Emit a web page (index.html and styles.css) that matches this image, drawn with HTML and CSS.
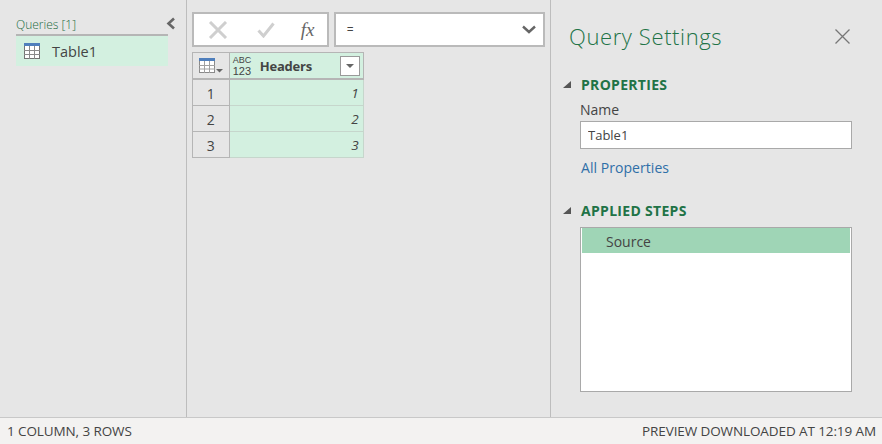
FILE: index.html
```html
<!DOCTYPE html>
<html lang="en">
<head>
  <meta charset="UTF-8" />
  <title>Query Editor</title>
  <link rel="stylesheet" href="styles.css">
</head>
<body>
  <div class="main">

    <!-- Queries pane -->
    <aside class="queries">
      <div class="queries-head">
        <span class="queries-title">Queries [1]</span>
        <svg class="collapse" width="10" height="13" viewBox="0 0 10 13"><path d="M8 1.5 L2.5 6.5 L8 11.5" fill="none" stroke="#666" stroke-width="2.6"/></svg>
      </div>
      <div class="query-item">
        <svg class="table-icon" width="16" height="16" viewBox="0 0 16 16">
          <rect x="0.5" y="0.5" width="15" height="15" fill="#fff" stroke="#737373"/>
          <rect x="0" y="0" width="16" height="3" fill="#4f7fbc"/>
          <path d="M0 7.5H16M0 11.5H16M5.5 3V16M10.5 3V16" stroke="#8a8a8a" fill="none"/>
        </svg>
        <span>Table1</span>
      </div>
    </aside>

    <!-- Formula bar and data grid -->
    <section class="center">
      <div class="formula-row">
        <div class="formula-buttons">
          <svg width="20" height="18" viewBox="0 0 20 18"><path d="M2 1 L18 17 M18 1 L2 17" stroke="#cfcfcf" stroke-width="3" fill="none"/></svg>
          <svg width="18" height="16" viewBox="0 0 18 16"><path d="M1.5 8.5 L6.5 14 L16.5 1.5" stroke="#cfcfcf" stroke-width="3" fill="none"/></svg>
          <span class="fx">fx</span>
        </div>
        <div class="formula-input">
          <span class="formula-text">=</span>
          <svg width="14" height="9" viewBox="0 0 14 9"><path d="M1 1.5 L7 7 L13 1.5" stroke="#666" stroke-width="2.4" fill="none"/></svg>
        </div>
      </div>

      <div class="grid">
        <div class="grid-row grid-head">
          <div class="corner">
            <svg width="24" height="15" viewBox="0 0 24 15">
              <rect x="0.5" y="0.5" width="15" height="14" fill="#fff" stroke="#8a8a8a"/>
              <rect x="0" y="0" width="16" height="3" fill="#4f7fbc"/>
              <path d="M0 7.5H16M0 11H16M5.5 3V15M10.5 3V15" stroke="#a0a0a0" fill="none"/>
              <path d="M17 11H24L20.5 14.5Z" fill="#666"/>
            </svg>
          </div>
          <div class="col-head">
            <div class="type-icon">
              <span class="type-abc">ABC</span>
              <span class="type-num">123</span>
            </div>
            <span class="col-name">Headers</span>
            <span class="col-filter"><i></i></span>
          </div>
        </div>
        <div class="grid-row">
          <div class="row-num">1</div>
          <div class="cell">1</div>
        </div>
        <div class="grid-row">
          <div class="row-num">2</div>
          <div class="cell">2</div>
        </div>
        <div class="grid-row">
          <div class="row-num">3</div>
          <div class="cell">3</div>
        </div>
      </div>
    </section>

    <!-- Query settings pane -->
    <aside class="settings">
      <div class="settings-head">
        <h1>Query Settings</h1>
        <svg width="15" height="15" viewBox="0 0 15 15"><path d="M0.5 0.5 L14.5 14.5 M14.5 0.5 L0.5 14.5" stroke="#777" stroke-width="1.3" fill="none"/></svg>
      </div>

      <h2 class="section-title"><i class="arrow"></i>PROPERTIES</h2>
      <div class="section-body">
        <label class="name-label" for="query-name">Name</label>
        <input class="name-input" id="query-name" value="Table1" />
        <a class="all-props" href="#">All Properties</a>
      </div>

      <h2 class="section-title steps-title"><i class="arrow"></i>APPLIED STEPS</h2>
      <div class="section-body">
        <div class="steps">
          <div class="step">Source</div>
        </div>
      </div>
    </aside>
  </div>

  <footer class="status">
    <span>1 COLUMN, 3 ROWS</span>
    <span>PREVIEW DOWNLOADED AT 12:19 AM</span>
  </footer>
</body>
</html>
```

FILE: styles.css
```css
* {
  box-sizing: border-box;
}

body {
  margin: 0;
  width: 882px;
  height: 444px;
  overflow: hidden;
  display: flex;
  flex-direction: column;
  font-family: "Open Sans", "Noto Sans", sans-serif;
  background: #e6e6e6;
  color: #444;
}

.main {
  display: flex;
  height: 417px;
}

/* Queries pane */
.queries {
  width: 187px;
  padding: 15px 18px 0 16px;
  border-right: 1px solid #bdbdbd;
}

.queries-head {
  display: flex;
  justify-content: space-between;
  height: 21px;
  border-bottom: 2px solid #b5b5b5;
}

.queries-title {
  font-size: 12px;
  font-weight: 300;
  line-height: 20px;
  color: #1b6b3f;
}

.collapse {
  margin-top: 2px;
  margin-right: -8px;
}

.query-item {
  display: flex;
  align-items: center;
  gap: 12px;
  height: 30px;
  padding-left: 8px;
  background: #d3f0e0;
  font-size: 14.5px;
}

/* Formula bar */
.center {
  width: 364px;
  padding: 12px 5px 0 5px;
}

.formula-row {
  display: flex;
  gap: 5px;
  height: 35px;
}

.formula-buttons,
.formula-input {
  display: flex;
  align-items: center;
  background: #fff;
  border: 2px solid #bababa;
}

.formula-buttons {
  width: 137px;
  padding-left: 14px;
}

.formula-buttons svg:nth-child(2) {
  margin-left: 29px;
}

.fx {
  margin-left: 26px;
  font-family: "Liberation Serif", serif;
  font-style: italic;
  font-size: 19px;
  color: #666;
}

.formula-input {
  flex: 1;
  justify-content: space-between;
  padding: 0 7px 0 11px;
}

.formula-text {
  font-size: 12px;
  color: #444;
}

/* Data grid */
.grid {
  width: 172px;
  margin-top: 5px;
  border-top: 1px solid #b5b5b5;
  background: #d3f0e0;
}

.grid-row {
  display: flex;
  height: 26px;
}

.grid-head {
  height: 27px;
}

.corner,
.row-num {
  width: 38px;
  background: #e6e6e6;
  border-left: 1px solid #b5b5b5;
  border-right: 1px solid #b5b5b5;
  border-bottom: 1px solid #b5b5b5;
}

.corner {
  padding: 5px 0 0 6px;
  border-bottom-width: 2px;
}

.corner svg {
  display: block;
}

.col-head {
  flex: 1;
  display: flex;
  align-items: center;
  padding: 0 3px 0 3px;
  border-right: 1px solid #b5b5b5;
  border-bottom: 2px solid #b5b5b5;
}

.type-icon {
  display: flex;
  flex-direction: column;
  width: 27px;
  font-family: "Liberation Sans", sans-serif;
  color: #444;
}

.type-abc {
  height: 10px;
  font-size: 9px;
  line-height: 10px;
}

.type-num {
  height: 12px;
  font-size: 11px;
  line-height: 12px;
}

.col-name {
  flex: 1;
  font-size: 13px;
  font-weight: 700;
  color: #444;
  letter-spacing: -0.2px;
}

.col-filter {
  display: flex;
  align-items: center;
  justify-content: center;
  width: 20px;
  height: 20px;
  background: #fff;
  border: 1px solid #9a9a9a;
}

.col-filter i {
  border-top: 4px solid #666;
  border-left: 4px solid transparent;
  border-right: 4px solid transparent;
}

.row-num {
  display: flex;
  align-items: center;
  justify-content: center;
  padding-top: 1px;
  font-size: 14px;
  color: #444;
}

.cell {
  flex: 1;
  padding-right: 4px;
  line-height: 26px;
  text-align: right;
  font-size: 13.5px;
  font-style: italic;
  color: #444;
  border-right: 1px solid #c6d6cc;
  border-bottom: 1px solid #c6d6cc;
}

/* Query settings */
.settings {
  flex: 1;
  padding: 0 30px 0 13px;
  border-left: 1px solid #bdbdbd;
}

.settings-head {
  display: flex;
  align-items: center;
  justify-content: space-between;
  height: 72px;
  padding: 0 2px 0 5px;
}

.settings-head h1 {
  margin: 0;
  font-size: 22px;
  font-weight: 300;
  letter-spacing: 0.6px;
  color: #217346;
}

.section-title {
  display: flex;
  align-items: center;
  height: 24px;
  margin: 0;
  font-size: 14px;
  font-weight: 700;
  letter-spacing: 0.3px;
  color: #217346;
}

.steps-title {
  margin-top: 20px;
}

.arrow {
  width: 0;
  height: 0;
  margin-left: -1px;
  margin-right: 10px;
  border-left: 8px solid transparent;
  border-bottom: 7px solid #555;
}

.section-body {
  padding-left: 16px;
}

.name-label {
  display: block;
  margin-top: 3px;
  height: 22px;
  line-height: 22px;
  font-size: 14px;
  color: #444;
}

.name-input {
  display: block;
  width: 272px;
  height: 28px;
  padding: 0 7px;
  font-family: "Open Sans", "Noto Sans", sans-serif;
  font-size: 13px;
  color: #444;
  background: #fff;
  border: 1px solid #a9a9a9;
  outline: none;
}

.all-props {
  display: block;
  margin-top: 9px;
  padding-left: 1px;
  font-size: 14px;
  line-height: 20px;
  letter-spacing: 0.05px;
  color: #2f6fa8;
  text-decoration: none;
}

.steps {
  width: 272px;
  height: 165px;
  margin-top: 5px;
  padding: 0 1px;
  background: #fff;
  border: 1px solid #a9a9a9;
}

.step {
  height: 25px;
  padding-left: 24px;
  line-height: 28px;
  font-size: 14px;
  color: #444;
  background: #9fd5b6;
}

/* Status bar */
.status {
  display: flex;
  justify-content: space-between;
  align-items: center;
  flex: 1;
  padding: 0 6px 0 7px;
  font-size: 13.5px;
  letter-spacing: -0.1px;
  color: #444;
  background: #f3f2f1;
  border-top: 1px solid #c8c8c8;
}
```
